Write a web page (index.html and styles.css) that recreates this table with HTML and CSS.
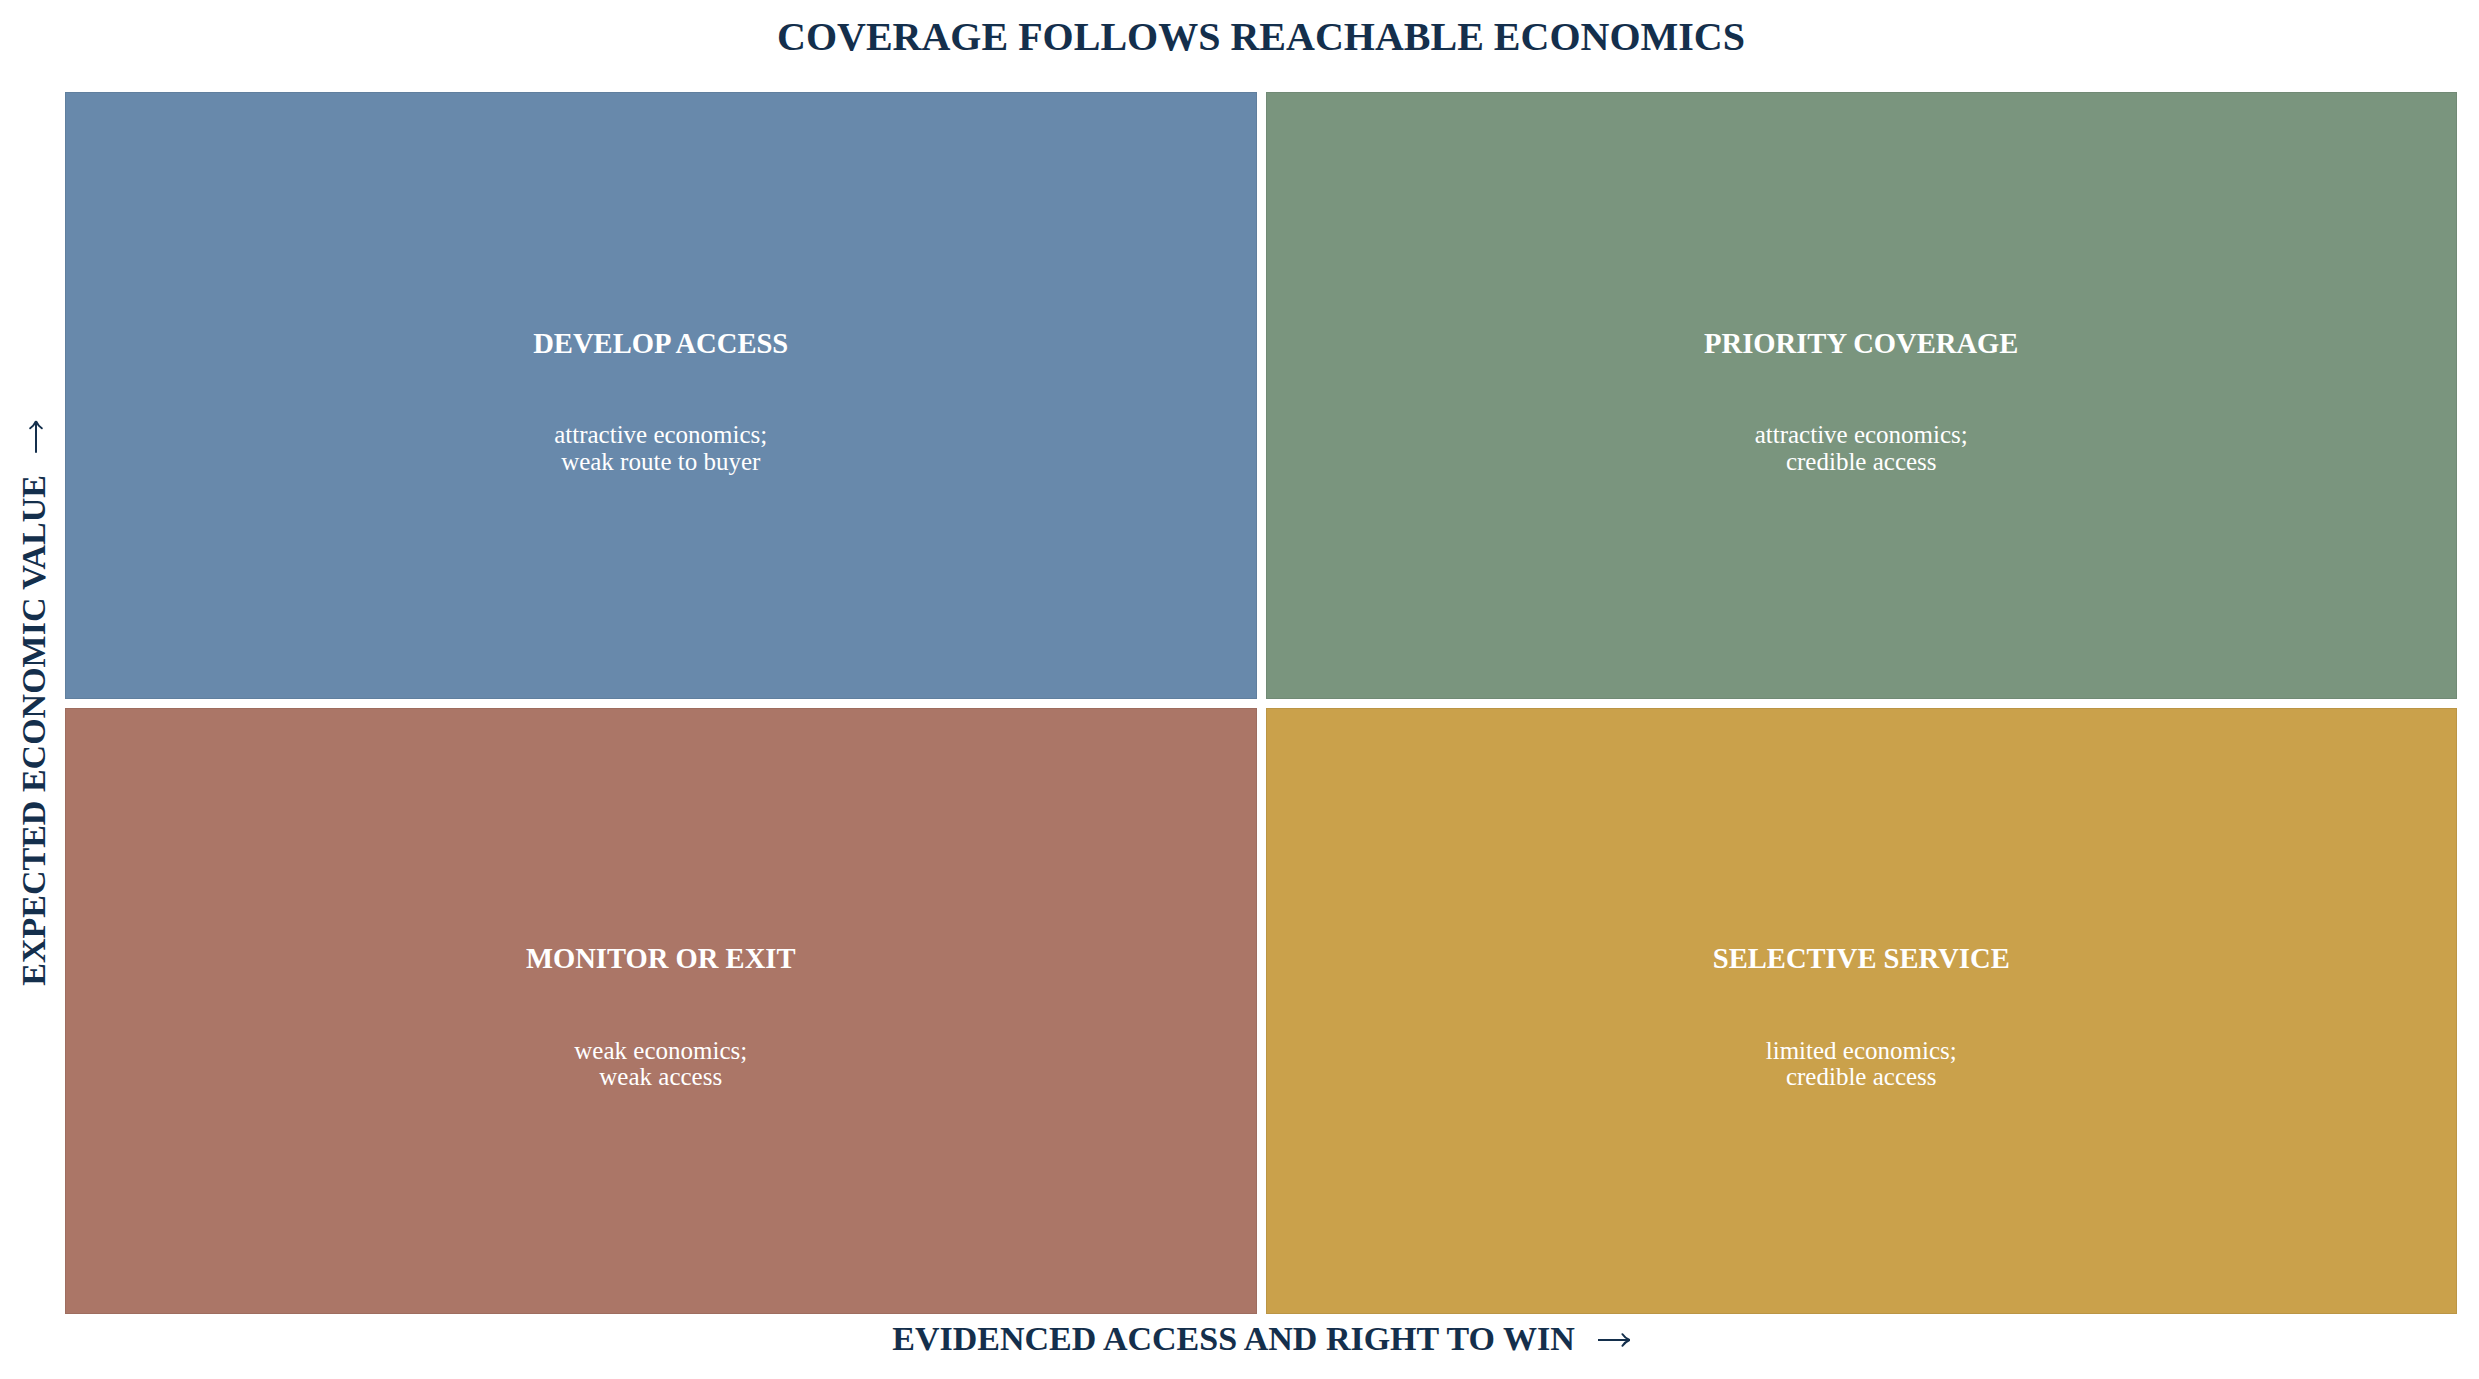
FILE: index.html
```html
<!DOCTYPE html>
<html lang="en">
<head>
<meta charset="utf-8">
<title>Coverage follows reachable economics</title>
<link rel="stylesheet" href="styles.css">
</head>
<body>
<div class="chart">
  <div class="title-cell">
    <h1 class="title">COVERAGE FOLLOWS REACHABLE ECONOMICS</h1>
  </div>
  <div class="y-cell">
    <div class="y-label">EXPECTED ECONOMIC VALUE<svg class="arrow-y" width="14" height="32" viewBox="0 0 14 32" aria-hidden="true"><path d="M7 0 V31 M1.2 24.5 Q5 27 7 31.5 Q9 27 12.8 24.5" fill="none" stroke="#142f4c" stroke-width="2" stroke-linecap="round" stroke-linejoin="round"/></svg></div>
  </div>
  <div class="plot">
    <div class="quad q-develop">
      <div class="q-title">DEVELOP ACCESS</div>
      <div class="q-sub">attractive economics;<br>weak route to buyer</div>
    </div>
    <div class="quad q-priority">
      <div class="q-title">PRIORITY COVERAGE</div>
      <div class="q-sub">attractive economics;<br>credible access</div>
    </div>
    <div class="quad q-monitor">
      <div class="q-title">MONITOR OR EXIT</div>
      <div class="q-sub">weak economics;<br>weak access</div>
    </div>
    <div class="quad q-selective">
      <div class="q-title">SELECTIVE SERVICE</div>
      <div class="q-sub">limited economics;<br>credible access</div>
    </div>
  </div>
  <div class="x-cell">
    <div class="x-label">EVIDENCED ACCESS AND RIGHT TO WIN<svg class="arrow-x" width="32" height="14" viewBox="0 0 32 14" aria-hidden="true"><path d="M0 7 H31 M24.5 1.2 Q27 5 31.5 7 Q27 9 24.5 12.8" fill="none" stroke="#142f4c" stroke-width="2" stroke-linecap="round" stroke-linejoin="round"/></svg></div>
  </div>
</div>
</body>
</html>
```
FILE: styles.css
```css
html, body {
  margin: 0;
  padding: 0;
  background: #ffffff;
}

body {
  font-family: "Liberation Serif", "Times New Roman", serif;
  color: #142f4c;
}

.chart {
  width: 2479px;
  height: 1379px;
  display: grid;
  grid-template-columns: 65px 2392px 1fr;
  grid-template-rows: 92px 1222px 1fr;
}

.title-cell {
  grid-column: 2;
  grid-row: 1;
  display: flex;
  justify-content: center;
  padding-top: 13px;
  box-sizing: border-box;
}

.title {
  margin: 0;
  font-size: 40px;
  font-weight: bold;
  line-height: normal;
  color: #142f4c;
  white-space: nowrap;
}

.y-cell {
  grid-column: 1;
  grid-row: 2;
  display: flex;
  align-items: center;
  justify-content: center;
  padding-left: 2px;
}

.y-label {
  writing-mode: vertical-rl;
  transform: rotate(180deg);
  font-size: 34px;
  font-weight: bold;
  line-height: 1;
  white-space: nowrap;
  color: #142f4c;
}

.arrow-y {
  display: inline-block;
  margin-top: 22px;
  vertical-align: middle;
  position: relative;
  left: -10px;
}

.x-cell {
  grid-column: 2;
  grid-row: 3;
  display: flex;
  justify-content: center;
  padding-top: 6px;
}

.x-label {
  font-size: 34px;
  font-weight: bold;
  line-height: normal;
  white-space: nowrap;
  color: #142f4c;
}

.arrow-x {
  display: inline-block;
  margin-left: 23px;
  vertical-align: middle;
  position: relative;
  top: -2px;
}

.plot {
  grid-column: 2;
  grid-row: 2;
  display: grid;
  grid-template-columns: 1fr 1fr;
  grid-template-rows: 607px 606px;
  gap: 9px;
}

.quad {
  display: flex;
  flex-direction: column;
  align-items: center;
  justify-content: center;
  padding-top: 14px;
  box-sizing: border-box;
  box-shadow: inset 0 0 0 1px rgba(0, 0, 0, 0.07);
  color: #ffffff;
  text-align: center;
}

.q-develop { background: #6889ab; }
.q-priority { background: #7a957e; }
.q-monitor { background: #ab7667; }
.q-selective { background: #caa14b; }

.q-title {
  font-size: 28.6px;
  font-weight: bold;
  line-height: 1;
  white-space: nowrap;
}

.q-sub {
  margin-top: 64px;
  font-size: 25px;
  line-height: 26.5px;
}
```
